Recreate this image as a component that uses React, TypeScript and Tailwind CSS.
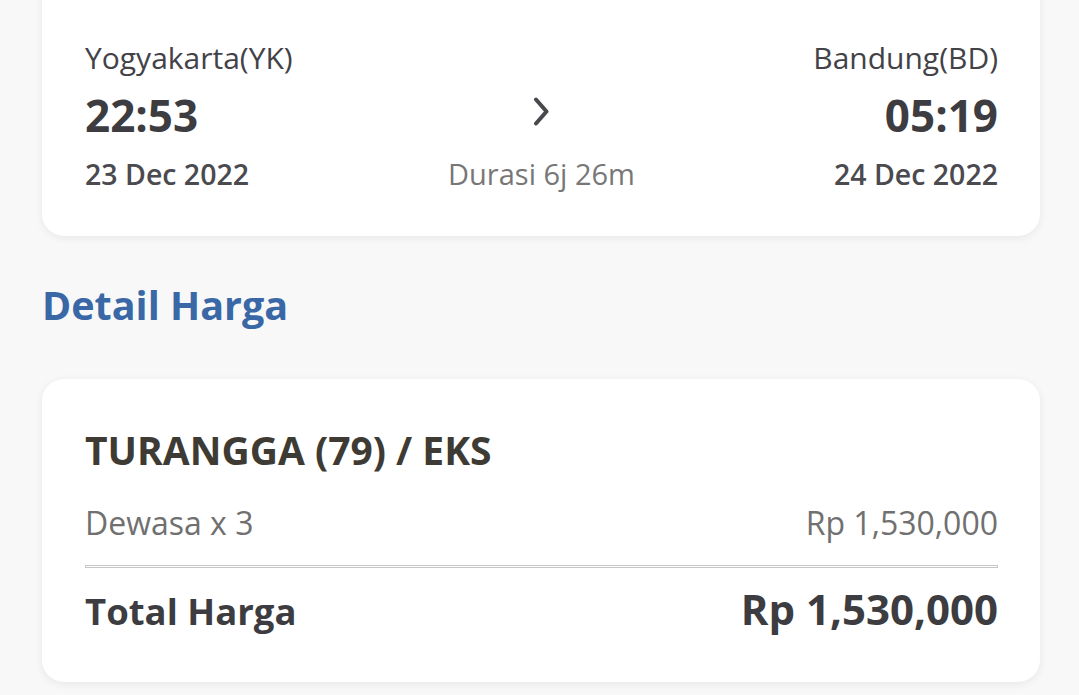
import React from 'react';

const font = { fontFamily: '"Open Sans", "Noto Sans", sans-serif' };

const Chevron: React.FC = () => (
  <svg width="20" height="30" viewBox="0 0 20 30" fill="none">
    <path d="M5 2.5 L15.5 14.5 L5 26.5" stroke="#48484d" strokeWidth="4" strokeLinecap="round" strokeLinejoin="round" />
  </svg>
);

const App: React.FC = () => {
  return (
    <div className="min-h-screen bg-[#f8f8f8]" style={font}>
      <div className="-mt-[70px] pl-[42px] pr-[39px] pb-10 flex flex-col">
        {/* route card */}
        <div className="bg-white rounded-[22px] shadow-[0_2px_8px_rgba(0,0,0,0.07)] pl-[43px] pr-[42px] pt-[34px] pb-[43px]">
          <div className="h-[38px] text-[28px] leading-[38px] text-[#9a9a9a]">Eksekutif (79)</div>
          <div className="mt-[36px] grid grid-cols-3">
            <div className="flex flex-col">
              <span className="text-[30px] leading-[40px] text-[#424247]">Yogyakarta(YK)</span>
              <span className="mt-[12px] text-[44px] leading-[50px] font-bold text-[#3c3c41]">22:53</span>
              <span className="mt-[15px] text-[28.5px] leading-[38px] font-semibold text-[#4a4a4f]">23 Dec 2022</span>
            </div>
            <div className="flex flex-col items-center">
              <div className="h-[40px]" />
              <div className="mt-[12px] h-[50px] pt-[7px] flex justify-center">
                <Chevron />
              </div>
              <span className="mt-[15px] text-[29px] leading-[38px] text-[#777777]">Durasi 6j 26m</span>
            </div>
            <div className="flex flex-col items-end">
              <span className="text-[30px] leading-[40px] text-[#424247]">Bandung(BD)</span>
              <span className="mt-[12px] text-[44px] leading-[50px] font-bold text-[#3c3c41]">05:19</span>
              <span className="mt-[15px] text-[28.5px] leading-[38px] font-semibold text-[#4a4a4f]">24 Dec 2022</span>
            </div>
          </div>
        </div>

        <h2 className="mt-[44px] text-[39.5px] leading-[50px] font-bold text-[#3a68a6]">Detail Harga</h2>

        {/* price card */}
        <div className="mt-[49px] bg-white rounded-[22px] shadow-[0_2px_8px_rgba(0,0,0,0.07)] pl-[43px] pr-[42px] pt-[47px] pb-[46px]">
          <div className="text-[39px] leading-[48px] font-bold text-[#3e3b34]">TURANGGA (79) / EKS</div>
          <div className="mt-[29px] flex justify-between text-[32px] leading-[40px] text-[#707070]">
            <span>Dewasa x 3</span>
            <span>Rp 1,530,000</span>
          </div>
          <div className="mt-[22px] h-[3px] border border-[#c6c6c6]" />
          <div className="mt-[16px] flex justify-between items-baseline font-bold text-[#3c3c41]">
            <span className="text-[36.5px] leading-[50px]">Total Harga</span>
            <span className="text-[42px] leading-[50px]">Rp 1,530,000</span>
          </div>
        </div>
      </div>
    </div>
  );
};

export default App;
